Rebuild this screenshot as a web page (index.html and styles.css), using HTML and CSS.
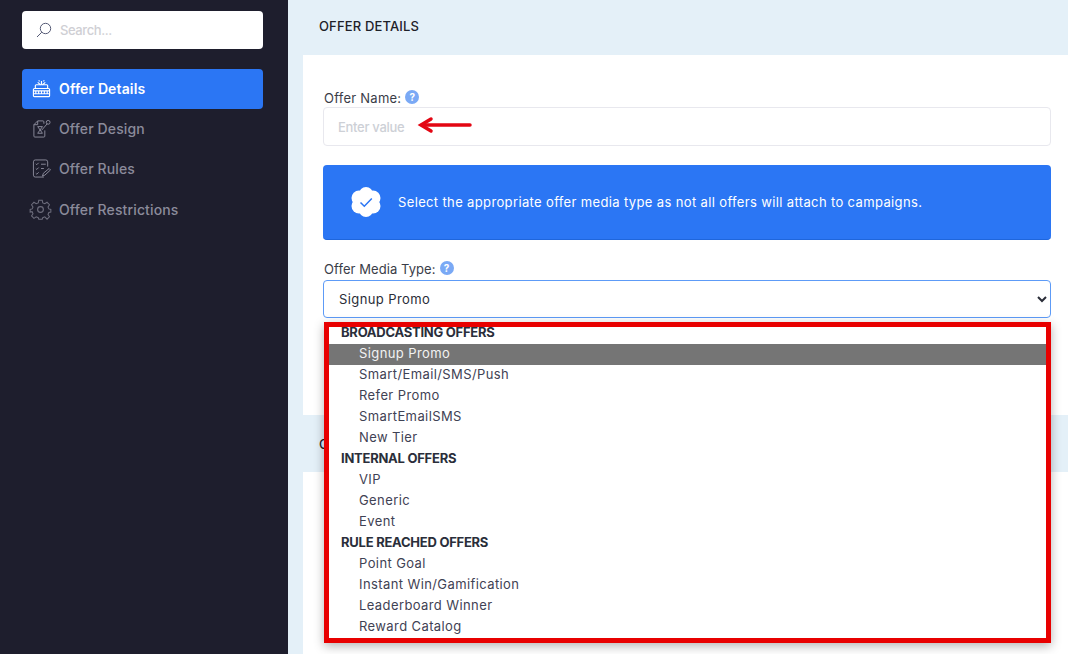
FILE: index.html
```html
<!DOCTYPE html>
<html lang="en">
<head>
<meta charset="utf-8">
<title>Offer Details</title>
<link rel="stylesheet" href="styles.css">
</head>
<body>
<div class="app">
  <aside class="sidebar">
    <label class="search">
      <svg class="search-icon" viewBox="0 0 16 16"><circle cx="9.5" cy="6.5" r="5.2"/><path d="M5.8 10.2 1 15"/></svg>
      <input class="search-input" type="text" placeholder="Search...">
    </label>
    <nav class="nav">
      <a class="nav-item active">
        <svg class="nav-icon" viewBox="0 0 20 20"><path d="M6 3.5 9 6M14 3.5 11 6M10 2v4M7 1.5l1 1M13 1.5l-1 1"/><rect x="3.5" y="6" width="13" height="4" rx="1"/><rect x="1.5" y="10" width="17" height="8.5" rx="1"/><path d="M1.5 12.5h17M1.5 15.5h17M4 12.5v3M7 12.5v3M10 12.5v3M13 12.5v3M16 12.5v3"/></svg>
        <span>Offer Details</span>
      </a>
      <a class="nav-item">
        <svg class="nav-icon" viewBox="0 0 20 20"><path d="M12.5 5V3a1 1 0 0 0-1-1H6L2 6v12a1 1 0 0 0 1 1h9.500a1 1 0 0 0 1-1v-6"/><path d="M6 2v4H2"/><path d="M6 8h5L6 15h5z"/><path d="M10 12l6-7"/><circle cx="17" cy="3.500" r="2"/></svg>
        <span>Offer Design</span>
      </a>
      <a class="nav-item">
        <svg class="nav-icon" viewBox="0 0 20 20"><path d="M16.500 8V3a2 2 0 0 0-2-2H3.500a2 2 0 0 0-2 2v14a2 2 0 0 0 2 2h9"/><path d="M4 5l1 1 2-2M4 10l1 1 2-2M4 15l1 1 2-2M9.500 5.500h5M9.500 10h3"/><path d="M11 18l1-3 6-5 1.500 1.500-6 5.500z"/></svg>
        <span>Offer Rules</span>
      </a>
      <a class="nav-item">
        <svg class="nav-icon gear" viewBox="0 0 24 24"><circle cx="12" cy="12" r="3"/><path d="M10 2h4l.6 3 2.400 1 2.600-1.700 2.800 2.800L20.700 9.700l1 2.300 2.300.6v3l-2.300.6-1 2.300 1.700 2.600-2.800 2.800L17 21.200l-2.400 1L14 24h-4l-.6-1.800-2.400-1-2.600 1.700-2.800-2.800 1.700-2.600-1-2.300L0 15.600v-3l2.300-.6 1-2.300L1.600 7.100l2.800-2.800L7 6l2.400-1z" transform="translate(1.200 0.600) scale(.9)"/></svg>
        <span>Offer Restrictions</span>
      </a>
    </nav>
  </aside>

  <main class="main">
    <header class="band"><h2 class="band-title">OFFER DETAILS</h2></header>
    <section class="card">
      <div class="field-label">Offer Name: <span class="help">?</span></div>
      <input class="control" type="text" placeholder="Enter value">
      <div class="notice">
        <svg class="notice-icon" viewBox="0 0 32 32"><g class="petal"><circle cx="16" cy="8" r="7"/><circle cx="23" cy="12" r="7.500"/><circle cx="23" cy="20" r="7.500"/><circle cx="16" cy="24" r="7"/><circle cx="9" cy="20" r="7.500"/><circle cx="9" cy="12" r="7.500"/><circle cx="16" cy="16" r="8"/></g><path class="tick" d="M10.500 16.500l3.800 3.800 7.500-7.800"/></svg>
        <p class="notice-text">Select the appropriate offer media type as not all offers will attach to campaigns.</p>
      </div>
      <div class="field-label second">Offer Media Type: <span class="help">?</span></div>
      <select class="control select-control"><option>Signup Promo</option></select>
    </section>
    <header class="band band-second"><h2 class="band-title">OFFER</h2></header>
    <section class="card-rest"></section>

    <svg class="arrow" viewBox="0 0 56 20"><path d="M54 10H6"/><path d="M15 4 5 10l10 6"/></svg>

    <div class="dropdown">
      <div class="list">
        <div class="group">BROADCASTING OFFERS</div>
        <div class="option selected">Signup Promo</div>
        <div class="option">Smart/Email/SMS/Push</div>
        <div class="option">Refer Promo</div>
        <div class="option">SmartEmailSMS</div>
        <div class="option">New Tier</div>
        <div class="group">INTERNAL OFFERS</div>
        <div class="option">VIP</div>
        <div class="option">Generic</div>
        <div class="option">Event</div>
        <div class="group">RULE REACHED OFFERS</div>
        <div class="option">Point Goal</div>
        <div class="option">Instant Win/Gamification</div>
        <div class="option">Leaderboard Winner</div>
        <div class="option">Reward Catalog</div>
      </div>
    </div>
  </main>
</div>
</body>
</html>
```

FILE: styles.css
```css
* { box-sizing: border-box; }
html, body { margin: 0; height: 100%; overflow: hidden; }
body { font-family: "Inter", "Liberation Sans", sans-serif; font-size: 13px; color: #3f4254; background: #fff; }
.app { display: flex; width: 1068px; height: 654px; overflow: hidden; }

.sidebar { width: 288px; flex: none; background: #1e1e2d; padding: 11px 25px 0 22px; }
.search { display: flex; align-items: center; gap: 8px; height: 38px; padding-left: 14px; background: #fff; border-radius: 4px; }
.search-icon { width: 16px; height: 16px; fill: none; stroke: #555a75; stroke-width: 1; }
.search-input { border: 0; outline: 0; padding: 0; width: 170px; font: 500 13px "Inter", sans-serif; letter-spacing: -.4px; background: transparent; }
.search-input::placeholder { color: #cfcfd4; opacity: 1; }

.nav { display: flex; flex-direction: column; margin-top: 20px; }
.nav-item { display: flex; align-items: center; gap: 8px; height: 40px; padding: 0 0 2px 10px; border-radius: 4px; color: #8b8b9b; font-size: 14px; font-weight: 500; letter-spacing: .13px; }
.nav-item:last-child { margin-top: 1px; }
.nav-item.active { background: #2b76f4; color: #fff; font-weight: 600; }
.nav-icon { width: 19px; height: 19px; flex: none; fill: none; stroke: #8b8b9b; stroke-width: 1; }
.active .nav-icon { stroke: #fff; stroke-width: 1.2; }
.gear { width: 23px; height: 23px; margin: 0 -1px 0 -3px; stroke: #6d6d7c; stroke-width: 1.200; }

.main { position: relative; flex: 1; background: #e4f0f8; padding-left: 15px; }
.band { height: 55px; display: flex; align-items: center; padding: 0 16px 3px; }
.band-title { margin: 0; font-size: 13px; font-weight: 500; color: #1e2129; letter-spacing: .15px; }
.card { height: 360px; background: #fff; padding: 33px 17px 0 20px; }
.field-label { display: flex; align-items: center; gap: 4px; height: 19px; padding-left: 1px; font-size: 13px; color: #3a3d48; letter-spacing: .25px; }
.field-label.second { margin-top: 19px; letter-spacing: .07px; }
.help { display: inline-flex; align-items: center; justify-content: center; width: 14px; height: 14px; border-radius: 50%; background: #7aa9f5; color: #fff; font-size: 10px; font-weight: 700; margin-top: -2px; letter-spacing: 0; }
.control { display: block; width: 100%; height: 39px; border: 1px solid #e8e8ee; border-radius: 4px; padding: 0 14px; font: 500 13px "Inter", sans-serif; letter-spacing: -.3px; color: #2a2d38; background: #fff; outline: 0; }
.control::placeholder { color: #cdd0d6; opacity: 1; }
.select-control { height: 38px; margin-top: 2px; padding-left: 11px; letter-spacing: .4px; font-weight: 400; border-color: #5d9bf7; }
.notice { display: flex; align-items: center; gap: 16px; height: 75px; margin-top: 19px; padding: 0 27px; background: #2b76f4; border-radius: 4px; border-bottom: 1px solid #1f66dc; }
.notice-icon { width: 32px; height: 32px; flex: none; }
.petal { fill: #fff; }
.tick { fill: none; stroke: #2b76f4; stroke-width: 1.500; }
.notice-text { margin: 0; color: #fff; font-size: 13px; letter-spacing: .36px; }
.band-second { height: 57px; padding-bottom: 0; }
.card-rest { height: 182px; background: #fff; }

.arrow { position: absolute; left: 128px; top: 115px; width: 56px; height: 20px; fill: none; stroke: #e30613; stroke-width: 3.500; stroke-linecap: round; }
.dropdown { position: absolute; left: 36px; top: 322px; width: 727px; height: 321px; border: 5px solid #e80000; background: #fff; box-shadow: 0 3px 10px rgba(0,0,0,.3); overflow: hidden; }
.list { margin: -4px 0 0; }
.group { height: 21px; line-height: 19px; padding-left: 12px; font-size: 13px; font-weight: 700; letter-spacing: -.25px; color: #2a2e3a; }
.option { height: 21px; line-height: 19px; padding-left: 30px; font-size: 13px; letter-spacing: .4px; color: #3f4254; }
.option.selected { background: #757575; color: #f2f2f2; }
```
